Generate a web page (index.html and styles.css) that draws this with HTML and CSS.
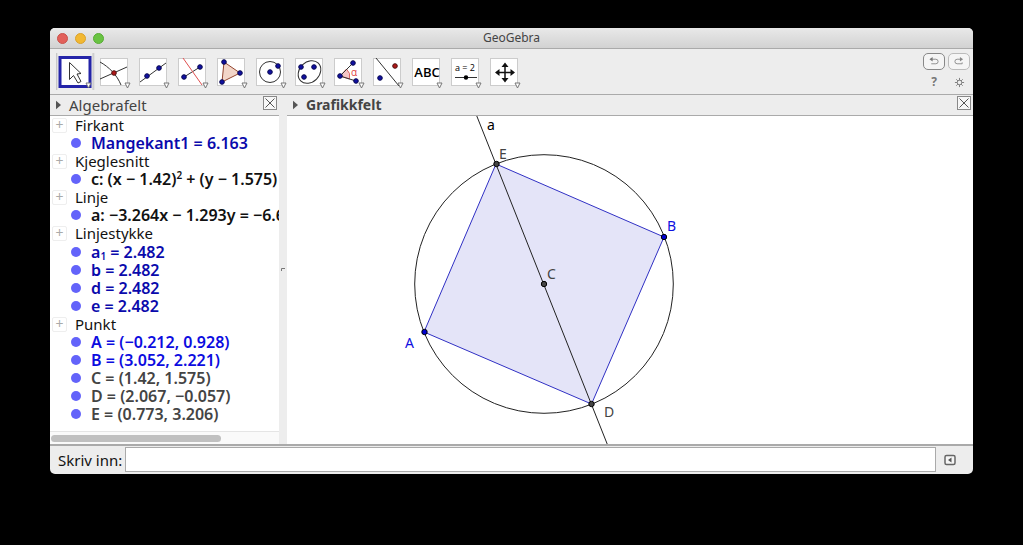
FILE: index.html
```html
<!DOCTYPE html>
<html lang="nb">
<head>
<meta charset="utf-8">
<title>GeoGebra</title>
<link rel="stylesheet" href="styles.css">
</head>
<body>
<div class="window">
  <header class="titlebar">
    <div class="lights"><span class="light red"></span><span class="light yellow"></span><span class="light green"></span></div>
    <h1 class="title">GeoGebra</h1>
  </header>
  <div class="toolbar">
    <div class="tools">
      <button class="tool selected" aria-label="Flytt"><svg viewBox="0 0 39 41">
        <rect x="4" y="4.500" width="30" height="29" fill="#fff" stroke="#2424a8" stroke-width="3"/>
        <path d="M13.500 9.500v17l4-4 4.500 7.500 3-1.500-4-7.500 4-.500z" class="thin white"/><path d="M30 30h5l-2.500 5z" class="drop"/></svg></button>
      <button class="tool" aria-label="Skjæring"><svg viewBox="0 0 39 41"><rect class="box" x="5.500" y="5.500" width="27" height="27"/>
        <path d="M5 9C14 14 22 22 26 32M5 26L32 14" class="thin"/><circle cx="19" cy="20" r="2.300" class="rd"/><path d="M30 30h5l-2.500 5z" class="drop"/></svg></button>
      <button class="tool" aria-label="Linje"><svg viewBox="0 0 39 41"><rect class="box" x="5.500" y="5.500" width="27" height="27"/>
        <path d="M6 29L32 10" class="thin"/><circle cx="13" cy="23" r="2.300" class="bd"/><circle cx="25" cy="15" r="2.300" class="bd"/><path d="M30 30h5l-2.500 5z" class="drop"/></svg></button>
      <button class="tool" aria-label="Midtnormal"><svg viewBox="0 0 39 41"><rect class="box" x="5.500" y="5.500" width="27" height="27"/>
        <path d="M11 24L27 14" class="thin"/><path d="M10 5L29 32" class="thin redline"/><circle cx="11" cy="24" r="2.300" class="bd"/><circle cx="27" cy="14" r="2.300" class="bd"/><path d="M30 30h5l-2.500 5z" class="drop"/></svg></button>
      <button class="tool" aria-label="Mangekant"><svg viewBox="0 0 39 41"><rect class="box" x="5.500" y="5.500" width="27" height="27"/>
        <path d="M12 9L28 20 10 29z" fill="#f2d5c8" stroke="#93452f"/><circle cx="12" cy="9" r="2.300" class="bd"/><circle cx="28" cy="20" r="2.300" class="bd"/><circle cx="10" cy="29" r="2.300" class="bd"/><path d="M30 30h5l-2.500 5z" class="drop"/></svg></button>
      <button class="tool" aria-label="Sirkel"><svg viewBox="0 0 39 41"><rect class="box" x="5.500" y="5.500" width="27" height="27"/>
        <circle cx="19" cy="19" r="10.500" class="thin"/><circle cx="19" cy="19" r="2.300" class="bd"/><circle cx="27" cy="13" r="2.300" class="bd"/><path d="M30 30h5l-2.500 5z" class="drop"/></svg></button>
      <button class="tool" aria-label="Kjeglesnitt"><svg viewBox="0 0 39 41"><rect class="box" x="5.500" y="5.500" width="27" height="27"/>
        <ellipse cx="19.500" cy="19" rx="12.500" ry="10" transform="rotate(-45 19.500 19)" class="thin"/><circle cx="11" cy="14" r="2.300" class="bd"/><circle cx="24" cy="14" r="2.300" class="bd"/><circle cx="14" cy="24" r="2.300" class="bd"/><path d="M30 30h5l-2.500 5z" class="drop"/></svg></button>
      <button class="tool" aria-label="Vinkel"><svg viewBox="0 0 39 41"><rect class="box" x="5.500" y="5.500" width="27" height="27"/>
        <path d="M11 23L17.500 16Q22 20 20.500 26z" fill="#f6c6c6" stroke="#d66"/><path d="M24 10L11 23 27 28" class="thin"/><circle cx="24" cy="10" r="2.300" class="bd"/><circle cx="11" cy="23" r="2.300" class="bd"/><circle cx="27" cy="28" r="2.300" class="bd"/><text x="25" y="23" class="alpha">α</text><path d="M30 30h5l-2.500 5z" class="drop"/></svg></button>
      <button class="tool" aria-label="Speiling"><svg viewBox="0 0 39 41"><rect class="box" x="5.500" y="5.500" width="27" height="27"/>
        <path d="M8 5L31 33" class="thin"/><circle cx="27" cy="13" r="2.300" class="rd"/><circle cx="12" cy="25" r="2.300" class="bd"/><path d="M30 30h5l-2.500 5z" class="drop"/></svg></button>
      <button class="tool" aria-label="Tekst"><svg viewBox="0 0 39 41"><rect class="box" x="5.500" y="5.500" width="27" height="27"/>
        <text x="20" y="24" class="abc">ABC</text><path d="M30 30h5l-2.500 5z" class="drop"/></svg></button>
      <button class="tool" aria-label="Glider"><svg viewBox="0 0 39 41"><rect class="box" x="5.500" y="5.500" width="27" height="27"/>
        <text x="19" y="18" class="slider">a = 2</text><path d="M9 24.500H31" class="thin"/><circle cx="20" cy="24.500" r="2.200"/><path d="M30 30h5l-2.500 5z" class="drop"/></svg></button>
      <button class="tool" aria-label="Flytt grafikkfeltet"><svg viewBox="0 0 39 41"><rect class="box" x="5.500" y="5.500" width="27" height="27"/>
        <path d="M20 12V27M12 19.500H28" stroke="#111" stroke-width="1.500"/><path d="M20 9.500l3.500 4.500h-7zM20 29.500l3.500-4.500h-7zM10 19.500l4.500-3.500v7zM30 19.500l-4.500-3.500v7z" fill="#111"/><path d="M30 30h5l-2.500 5z" class="drop"/></svg></button>
    </div>
    <div class="actions">
      <button class="round" aria-label="Angre"><svg viewBox="0 0 22 16"><path d="M7.500 5.500H13Q15.500 5.500 15.500 8T13 10.500H8" class="arrow"/><path d="M9.500 3v5L6 5.500z" fill="#777"/></svg></button>
      <button class="round faint" aria-label="Gjør om"><svg viewBox="0 0 22 16"><path d="M13 5.500H9Q6.500 5.500 6.500 8T9 10.500H14.500V9" class="arrow"/><path d="M12 3v5l3.500-2.500z" fill="#888"/></svg></button>
      <button class="plain help" aria-label="Hjelp">?</button>
      <button class="plain" aria-label="Innstillinger"><svg class="gear" viewBox="0 0 12 12"><g stroke="#777"><path d="M6 1V11M1 6H11M2.500 2.500L9.500 9.500M9.500 2.500L2.500 9.500"/></g><circle cx="6" cy="6" r="2.500" fill="#eee" stroke="#777"/></svg></button>
    </div>
  </div>
  <main class="panes">
    <section class="algebra">
      <div class="head"><svg class="tri" viewBox="0 0 6 10"><path d="M0 0L6 5 0 10z"/></svg><h2>Algebrafelt</h2><button class="close" aria-label="Lukk algebrafelt"><svg viewBox="0 0 12 12"><path d="M1.500 1.500l9 9M10.500 1.500l-9 9"/></svg></button></div>
      <ul class="tree">
        <li class="group">Firkant</li>
        <li class="item blue">Mangekant1 = 6.163</li>
        <li class="group">Kjeglesnitt</li>
        <li class="item">c: (x − 1.42)<sup>2</sup> + (y − 1.575)</li>
        <li class="group">Linje</li>
        <li class="item">a: −3.264x − 1.293y = −6.672</li>
        <li class="group">Linjestykke</li>
        <li class="item blue indexed">a<sub>1</sub> = 2.482</li>
        <li class="item blue">b = 2.482</li>
        <li class="item blue">d = 2.482</li>
        <li class="item blue">e = 2.482</li>
        <li class="group">Punkt</li>
        <li class="item bright">A = (−0.212, 0.928)</li>
        <li class="item bright">B = (3.052, 2.221)</li>
        <li class="item gray">C = (1.42, 1.575)</li>
        <li class="item gray">D = (2.067, −0.057)</li>
        <li class="item gray">E = (0.773, 3.206)</li>
      </ul>
      <div class="scroll"><div class="thumb"></div></div>
    </section>
    <div class="splitter"><svg viewBox="0 0 8 8"><path d="M2.500 5V2.500H6" fill="none" stroke="#777"/></svg></div>
    <section class="graphics">
      <div class="head"><svg class="tri" viewBox="0 0 6 10"><path d="M0 0L6 5 0 10z"/></svg><h2>Grafikkfelt</h2><button class="close" aria-label="Lukk grafikkfelt"><svg viewBox="0 0 12 12"><path d="M1.500 1.500l9 9M10.500 1.500l-9 9"/></svg></button></div>
      <svg class="plot" viewBox="287 116 686 328" preserveAspectRatio="xMidYMid slice">
        <path d="M496 164L664 237 591.500 404 424 332z" fill="#e4e4f8" stroke="#3030c4"/>
        <circle cx="544" cy="284" r="129.300" class="curve"/>
        <path d="M476 114L608 446" class="curve"/>
        <g stroke="#000"><g fill="#0000d0"><circle cx="424.500" cy="332" r="2.700"/><circle cx="664" cy="237" r="2.700"/></g>
        <g fill="#444"><circle cx="496.500" cy="164" r="2.700"/><circle cx="544" cy="284" r="2.700"/><circle cx="591.500" cy="404" r="2.700"/></g></g>
        <text x="487" y="130">a</text><text x="499" y="159" class="dep">E</text><text x="667" y="231" class="free">B</text>
        <text x="547" y="279" class="dep">C</text><text x="405" y="348" class="free">A</text><text x="604" y="417" class="dep">D</text>
      </svg>
    </section>
  </main>
  <footer class="inputbar">
    <label for="command">Skriv inn:</label><input id="command" type="text">
    <button class="plain" aria-label="Vis inntastingshjelp"><svg class="helpicon" viewBox="0 0 12 12"><rect x="1" y="1.500" width="10" height="9" rx="1.500" fill="#f5f5f5" stroke="#666" stroke-width="1.500"/><path d="M7.500 3.500v5L4 6z" fill="#555"/></svg></button>
  </footer>
</div>
</body>
</html>
```
FILE: styles.css
```css
* { box-sizing: border-box; }
body { margin: 0; min-height: 100vh; padding: 28px 50px 71px; background: #000; display: flex; font-family: "Noto Sans", "Open Sans", sans-serif; font-size: 15px; color: #111; }
button { border: 0; padding: 0; background: none; font: inherit; color: inherit; }
svg { display: block; }
.window { flex: 1; min-width: 0; display: flex; flex-direction: column; background: #ededed; border-radius: 5px; overflow: hidden; }
.titlebar { display: grid; grid-template-columns: 1fr auto 1fr; align-items: center; height: 21px; padding: 0 7px; background: linear-gradient(#e9e9e9, #d2d2d2); border-bottom: 1px solid #aaa; }
.lights { display: flex; gap: 7px; }
.light { width: 11px; height: 11px; border-radius: 50%; border: 1px solid; }
.red { background: #e2605a; border-color: #c9514b; }
.yellow { background: #f2b832; border-color: #d9a12c; }
.green { background: #69c342; border-color: #58ab35; }
.title { margin: 0; font-size: 12px; font-weight: 400; line-height: 20px; color: #444; }
.toolbar { display: flex; justify-content: space-between; padding: 4px 3px 0 6px; height: 46px; border-bottom: 1px solid #aaa; }
.tools { display: flex; }
.tool { width: 39px; height: 41px; }
.tool svg { width: 39px; height: 41px; }
.selected { height: 37px; background: linear-gradient(90deg, #bbb, #ededed 2px, #ededed 36px, #c4c4c4 37px, #ededed 39px); }
.box { fill: #fff; stroke: #ccc; }
.thin { fill: none; stroke: #333; }
.white { fill: #fff; }
.redline { stroke: #e05050; }
.bd { fill: #1010a0; stroke: #080850; }
.rd { fill: #b01818; stroke: #501010; }
.drop { fill: #fff; stroke: #777; }
.tool text { font-family: "Open Sans", sans-serif; text-anchor: middle; }
.alpha { font-size: 10px; fill: #e04040; }
.abc { font-size: 13px; font-weight: 600; }
.slider { font-size: 9px; }
.actions { display: grid; grid-template-columns: 22px 22px; gap: 3px; align-content: start; justify-items: center; }
.round { width: 22px; height: 17px; border: 1px solid #888; border-radius: 5px; background: #f5f5f5; }
.round svg { width: 20px; height: 15px; }
.faint { border-color: #bbb; }
.arrow { fill: none; stroke: #888; }
.help { font-size: 12px; line-height: 18px; font-weight: 700; color: #777; }
.gear { width: 11px; height: 11px; }
.panes { flex: 1; display: flex; min-height: 0; }
.algebra { width: 229px; flex: none; display: flex; flex-direction: column; background: #fff; }
.graphics { flex: 1; min-width: 0; display: flex; flex-direction: column; background: #fff; }
.head { display: flex; align-items: center; height: 21px; flex: none; padding: 0 2px 0 6px; background: #ededed; border-bottom: 1px solid #aaa; }
.tri { width: 5px; height: 10px; margin-right: 8px; fill: #555; }
.head h2 { margin: 0; flex: 1; font-size: 15px; line-height: 20px; font-weight: 400; color: #444; }
.graphics h2 { font-size: 14px; font-weight: 700; }
.close { width: 14px; height: 14px; border: 1px solid #888; background: #f7f7f7; align-self: flex-start; margin-top: 1px; }
.close svg { width: 12px; height: 12px; fill: none; stroke: #555; }
.tree { list-style: none; margin: 0; padding: 0; flex: 1; overflow: hidden; line-height: 18px; white-space: nowrap; }
.tree li { display: flex; align-items: center; height: 18px; }
.group::before { content: "+"; width: 13px; height: 13px; margin: 0 8px 0 2px; border: 1px solid #eee; border-radius: 2px; font-size: 14px; line-height: 11px; text-align: center; color: #aaa; }
.tree .item { padding-left: 21px; font-size: 16px; font-weight: 600; white-space: pre; }
.item::before { content: ""; flex: none; width: 10px; height: 10px; margin-right: 10px; border-radius: 50%; background: #6363fa; }
.tree .indexed { height: 19px; }
.tree sup, .tree sub { font-size: 10px; line-height: 10px; }
.tree sup { align-self: flex-start; }
.tree sub { align-self: flex-end; }
.blue { color: #0a0aac; }
.bright { color: #0c0ce0; }
.gray { color: #444; }
.scroll { height: 13px; border-top: 1px solid #e5e5e5; padding: 3px 1px; background: #fafafa; }
.thumb { width: 75%; height: 7px; border-radius: 4px; background: #c0c0c0; }
.splitter { width: 8px; flex: none; display: flex; align-items: center; background: #ededed; }
.splitter svg { width: 8px; height: 8px; }
.plot { flex: 1; width: 100%; min-height: 0; font-size: 14px; }
.curve { fill: none; stroke: #222; }
.free { fill: #1010e0; }
.dep { fill: #444; }
.inputbar { display: flex; align-items: center; height: 30px; border-top: 2px solid #aaa; padding: 0 0 1px 8px; }
.inputbar label { margin-right: 3px; }
.inputbar input { flex: 1; min-width: 0; height: 25px; border: 1px solid #aaa; background: #fff; padding: 0 4px; font: inherit; }
.inputbar .plain { width: 37px; padding-left: 8px; }
.helpicon { width: 12px; height: 12px; }
```
